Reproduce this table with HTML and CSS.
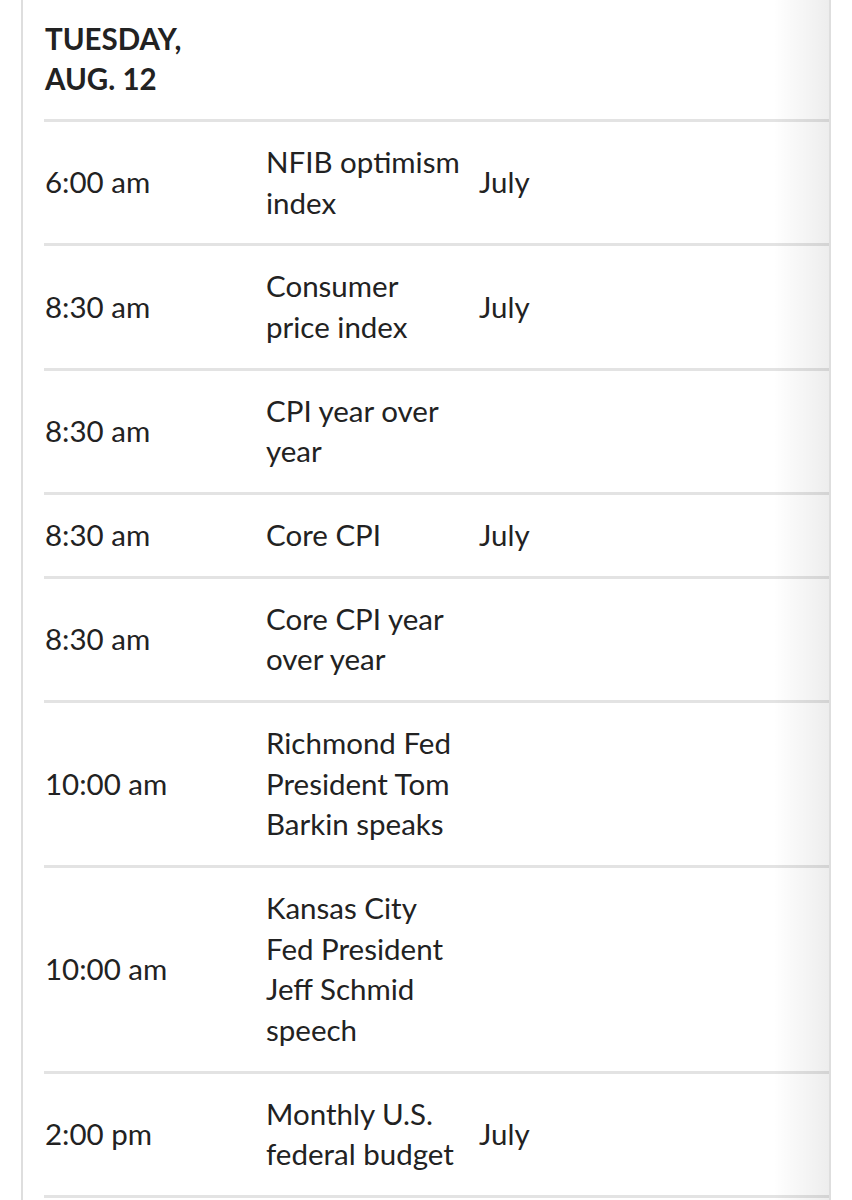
FILE: index.html
```html
<!DOCTYPE html>
<html>
<head>
<meta charset="utf-8">
<link rel="stylesheet" href="styles.css">
</head>
<body>
<div class="panel">
  <h2 class="day">TUESDAY,<br>AUG. 12</h2>
  <div class="rows">
    <div class="row"><div class="time">6:00 am</div><div class="event">NFIB optimism index</div><div class="period">July</div></div>
    <div class="row"><div class="time">8:30 am</div><div class="event">Consumer price index</div><div class="period">July</div></div>
    <div class="row"><div class="time">8:30 am</div><div class="event">CPI year over year</div><div class="period"></div></div>
    <div class="row"><div class="time">8:30 am</div><div class="event">Core CPI</div><div class="period">July</div></div>
    <div class="row"><div class="time">8:30 am</div><div class="event">Core CPI year over year</div><div class="period"></div></div>
    <div class="row"><div class="time">10:00 am</div><div class="event">Richmond Fed President Tom Barkin speaks</div><div class="period"></div></div>
    <div class="row"><div class="time">10:00 am</div><div class="event">Kansas City Fed President Jeff Schmid speech</div><div class="period"></div></div>
    <div class="row"><div class="time">2:00 pm</div><div class="event">Monthly U.S. federal budget</div><div class="period">July</div></div>
  </div>
</div>
</body>
</html>
```
FILE: styles.css
```css
html, body {
  margin: 0;
  padding: 0;
  background: #fff;
}
body {
  font-family: Lato, "Open Sans", sans-serif;
  color: #222;
  -webkit-font-smoothing: antialiased;
}
.panel {
  position: relative;
  margin-left: 21px;
  border-left: 2px solid #dedede;
  border-right: 2px solid #dedede;
  padding-left: 21px;
  box-sizing: content-box;
  width: 785px;
  min-height: 1200px;
}
.panel::after {
  content: "";
  position: absolute;
  top: 0;
  right: 0;
  bottom: 0;
  width: 56px;
  background: linear-gradient(to right, rgba(0,0,0,0), rgba(0,0,0,0.07));
  pointer-events: none;
}
.day {
  margin: 0;
  padding: 19px 0 20px 1px;
  font-size: 29.5px;
  line-height: 40px;
  font-weight: 700;
  color: #222;
}
.rows {
  border-bottom: 3px solid #e3e3e3;
}
.row {
  display: grid;
  grid-template-columns: 222px 213px 1fr;
  align-items: center;
  border-top: 3px solid #e3e3e3;
  padding: 20px 0;
  font-size: 29.5px;
  line-height: 40.65px;
}
.time {
  padding-left: 1px;
}
.event {
  padding-right: 17px;
}
```
